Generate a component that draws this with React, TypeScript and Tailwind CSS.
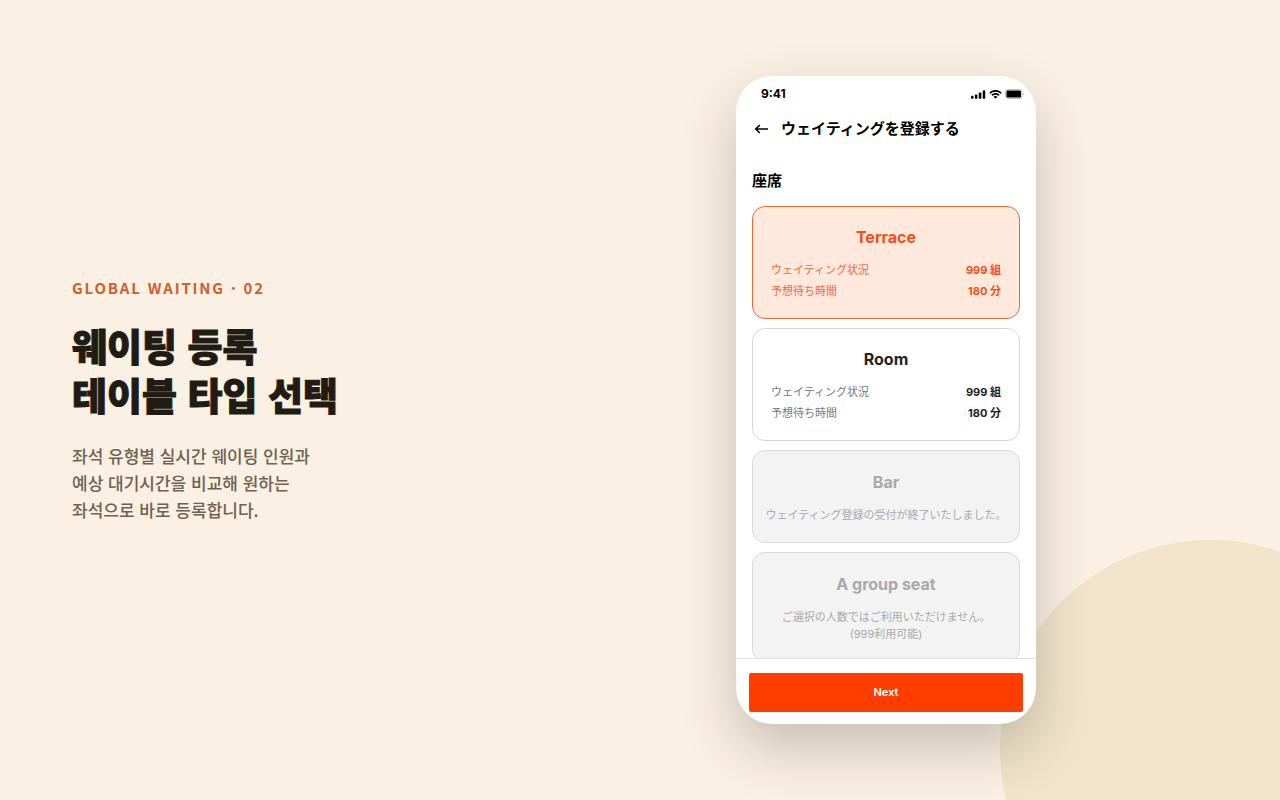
import { ReactNode, useState } from "react";

type Seat = {
  name: string;
  people?: string;
  minutes?: string;
  notice?: string[];
};

const seats: Seat[] = [
  { name: "Terrace", people: "999 組", minutes: "180 分" },
  { name: "Room", people: "999 組", minutes: "180 分" },
  { name: "Bar", notice: ["ウェイティング登録の受付が終了いたしました。"] },
  { name: "A group seat", notice: ["ご選択の人数ではご利用いただけません。", "(999利用可能)"] },
];

function StatusIcons() {
  return (
    <div className="flex items-center gap-[3px]" aria-hidden="true">
      <svg width="15" height="9" viewBox="0 0 15 9">
        <rect x="0" y="5.8" width="2.5" height="3" rx="0.9" />
        <rect x="3.9" y="4.4" width="2.5" height="4.4" rx="0.9" />
        <rect x="7.8" y="2.4" width="2.5" height="6.4" rx="0.9" />
        <rect x="11.7" y="0.2" width="2.5" height="8.6" rx="0.9" />
      </svg>
      <svg width="13" height="9" viewBox="0 0 17 12">
        <path d="M8.5 2.4c2.4 0 4.7.9 6.4 2.6.1.1.3.1.5 0l1.2-1.3c.1-.1.1-.4 0-.5-4.5-4.3-11.7-4.3-16.2 0-.1.1-.1.4 0 .5l1.2 1.3c.1.1.3.1.5 0 1.7-1.7 4-2.6 6.4-2.6z" />
        <path d="M8.5 6.4c1.3 0 2.6.5 3.6 1.4.1.1.3.1.5 0l1.2-1.3c.1-.1.1-.4 0-.5-3-2.8-7.6-2.8-10.6 0-.1.1-.1.4 0 .5l1.2 1.3c.1.1.3.1.5 0 1-.9 2.3-1.4 3.6-1.4z" />
        <path d="M10.9 9.3c.1-.1.1-.4 0-.5-1.4-1.2-3.4-1.2-4.8 0-.1.1-.1.4 0 .5l2.1 2.1c.1.1.4.1.5 0z" />
      </svg>
      <svg width="19" height="10" viewBox="0 0 19 10">
        <rect x="0.5" y="0.5" width="16.5" height="9" rx="2.4" fill="#fff" stroke="#bdbdbd" />
        <rect x="1.5" y="1.5" width="14.5" height="7" rx="1.2" />
        <path d="M17.9 3.4v3.2c.6-.3 1-.9 1-1.6s-.4-1.3-1-1.6z" fill="#bdbdbd" />
      </svg>
    </div>
  );
}

function Row({ label, value, tone }: { label: string; value: string; tone: string }) {
  return (
    <span className="flex justify-between px-[10px]">
      <span className={tone}>{label}</span>
      <span className="font-bold">{value}</span>
    </span>
  );
}

function SeatCard({ seat, selected, onSelect }: { seat: Seat; selected: boolean; onSelect: () => void }) {
  const closed = Boolean(seat.notice);
  const look = closed
    ? "border-[#d9d9d9] bg-[#f3f3f3] pt-[19px] text-[#a9a9a9]"
    : selected
      ? "border-[#e8683e] bg-[#ffe9dd] pt-[18px] text-[#f94d14]"
      : "border-[#d6d6d6] bg-white pt-[18px] text-[#222222]";
  const labelTone = selected ? "text-[#f0683e]" : "text-[#777777]";
  let body: ReactNode;
  if (seat.notice) {
    body = seat.notice.map((line) => <span key={line}>{line}</span>);
  } else {
    body = (
      <span className="flex flex-col gap-1">
        <Row label="ウェイティング状況" value={seat.people ?? ""} tone={labelTone} />
        <Row label="予想待ち時間" value={seat.minutes ?? ""} tone={labelTone} />
      </span>
    );
  }
  return (
    <button
      type="button"
      disabled={closed}
      aria-pressed={selected}
      onClick={onSelect}
      className={`flex w-full shrink-0 flex-col rounded-[13px] border px-2 pb-[18px] text-center whitespace-nowrap ${look}`}
    >
      <span className="text-base leading-6 font-bold">{seat.name}</span>
      <span className="mt-[13px] flex flex-col text-[11px] leading-[17px]">{body}</span>
    </button>
  );
}

function Phone() {
  const [selected, setSelected] = useState("Terrace");
  return (
    <section
      lang="ja"
      className="flex aspect-[300/648] w-[300px] flex-col overflow-hidden rounded-[36px] bg-white font-['Inter','Noto_Sans_CJK_JP',sans-serif] text-black shadow-[0_24px_56px_rgba(43,35,24,0.24)]"
    >
      <div className="flex h-9 shrink-0 items-center justify-between pr-3 pl-[25px]">
        <span className="text-xs font-bold">9:41</span>
        <StatusIcons />
      </div>
      <header className="flex h-[34px] shrink-0 items-center gap-3 pl-[18px]">
        <button type="button" aria-label="戻る">
          <svg width="15" height="12" viewBox="0 0 15 12" fill="none" stroke="currentColor" strokeWidth="1.7">
            <path d="M14 6H1.8M5.8 2 1.8 6l4 4" />
          </svg>
        </button>
        <h2 className="text-[15px] leading-6 font-bold">ウェイティングを登録する</h2>
      </header>
      <div className="flex min-h-0 flex-1 flex-col overflow-hidden px-4 pt-[23px]">
        <h3 className="text-[15px] leading-6 font-bold">座席</h3>
        <div className="mt-[13px] flex flex-col gap-[9px]">
          {seats.map((seat) => (
            <SeatCard
              key={seat.name}
              seat={seat}
              selected={seat.name === selected}
              onSelect={() => setSelected(seat.name)}
            />
          ))}
        </div>
      </div>
      <footer className="shrink-0 border-t border-[#e2e2e2] px-[13px] pt-[14px] pb-3">
        <button
          type="button"
          className="block h-[39px] w-full rounded-[2px] bg-[#ff3d00] text-[11px] font-semibold text-white"
        >
          Next
        </button>
      </footer>
    </section>
  );
}

export default function App() {
  return (
    <main
      lang="ko"
      className="relative isolate flex min-h-screen items-center overflow-hidden bg-[#faf0e3] pl-[72px] font-['Noto_Sans_CJK_KR',sans-serif]"
    >
      <div className="absolute -right-[140px] -bottom-[160px] -z-10 size-[420px] rounded-full bg-[#f1e4cb]" />
      <div className="w-[420px] shrink-0 pb-[2px]">
        <p className="text-[15px] leading-6 font-bold tracking-[0.12em] text-[#cf5f2e]">GLOBAL WAITING · 02</p>
        <h1 className="mt-5 text-[38px] leading-[49px] font-black text-[#211b13] [-webkit-text-stroke:1px_#211b13]">
          웨이팅 등록
          <br />
          테이블 타입 선택
        </h1>
        <p className="mt-6 text-[17px] leading-[27px] font-medium text-[#6e6250]">
          좌석 유형별 실시간 웨이팅 인원과
          <br />
          예상 대기시간을 비교해 원하는
          <br />
          좌석으로 바로 등록합니다.
        </p>
      </div>
      <div className="flex flex-1 justify-center py-10">
        <Phone />
      </div>
    </main>
  );
}
